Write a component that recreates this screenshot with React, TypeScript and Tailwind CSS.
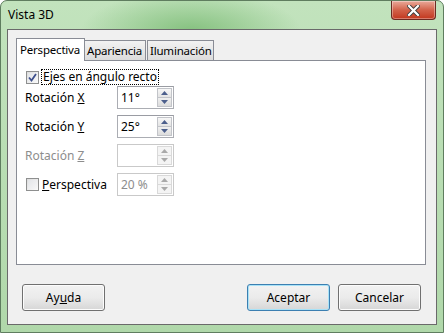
import React from 'react'

const font = { fontFamily: '"Noto Sans", "Open Sans", sans-serif' }

function Arrow({ up, disabled }: { up: boolean; disabled?: boolean }) {
  const c = disabled ? '#a9a9a9' : '#4c5f8c'
  return (
    <svg width="7" height="4" viewBox="0 0 7 4">
      {up ? <path d="M0 4 L3.5 0 L7 4 Z" fill={c} /> : <path d="M0 0 L3.5 4 L7 0 Z" fill={c} />}
    </svg>
  )
}

function Spin({ value, disabled }: { value: string; disabled?: boolean }) {
  return (
    <div
      className={`flex h-[23px] w-[57px] items-stretch border bg-white ${
        disabled ? 'border-[#c9c9c9]' : 'border-[#abadb3] border-t-[#9a9ca3]'
      }`}
    >
      <div className={`flex flex-1 items-center pl-[3px] text-[12px] ${disabled ? 'text-[#8d8d8d]' : 'text-black'}`}>
        {value}
      </div>
      <div className="flex w-[16px] flex-col py-[1px] pr-[1px]">
        <div
          className={`flex flex-1 items-center justify-center border ${
            disabled
              ? 'border-[#d9d9d9] bg-[#f4f4f4]'
              : 'border-[#c2c4c9] bg-gradient-to-b from-[#f7f7f7] to-[#e4e4e4]'
          }`}
        >
          <Arrow up disabled={disabled} />
        </div>
        <div
          className={`flex flex-1 items-center justify-center border border-t-0 ${
            disabled
              ? 'border-[#d9d9d9] bg-[#f4f4f4]'
              : 'border-[#c2c4c9] bg-gradient-to-b from-[#f0f0f0] to-[#dcdcdc]'
          }`}
        >
          <Arrow up={false} disabled={disabled} />
        </div>
      </div>
    </div>
  )
}

function Check({ checked }: { checked?: boolean }) {
  return (
    <div className="flex h-[13px] w-[13px] shrink-0 items-center justify-center border border-[#8e8f8f] bg-gradient-to-br from-[#dcdcdc] to-[#fbfbfb]">
      <div className="flex h-[9px] w-[9px] items-center justify-center bg-gradient-to-br from-[#e3e5e8] to-[#f6f6f7]">
        {checked && (
          <svg width="9" height="9" viewBox="0 0 9 9">
            <path d="M1 4.5 L3.5 7.5 L8 1" stroke="#3d4f8c" strokeWidth="1.8" fill="none" />
          </svg>
        )}
      </div>
    </div>
  )
}

function Row({ label, value, disabled }: { label: React.ReactNode; value: string; disabled?: boolean }) {
  return (
    <div className="flex h-[23px] items-center">
      <div className={`w-[100px] pl-[8px] text-[12px] ${disabled ? 'text-[#8d8d8d]' : 'text-black'}`}>{label}</div>
      <Spin value={value} disabled={disabled} />
    </div>
  )
}

function Button({ children, primary }: { children: React.ReactNode; primary?: boolean }) {
  return (
    <div
      className={`flex h-[27px] w-[83px] items-center justify-center rounded-[3px] border bg-gradient-to-b from-[#f2f2f2] via-[#ebebeb] to-[#d6d6d6] text-[12px] text-black ${
        primary ? 'border-[#3c7fb1] shadow-[inset_0_0_0_1px_#a8e2f7]' : 'border-[#707070] shadow-[inset_0_0_0_1px_#fcfcfc]'
      }`}
    >
      {children}
    </div>
  )
}

export default function App() {
  return (
    <div
      className="flex h-[333px] w-[444px] flex-col overflow-hidden rounded-t-[7px] border border-[#5f7d5f] bg-[#b3dbae]"
      style={{
        ...font,
        backgroundImage:
          'radial-gradient(ellipse 110px 40px at 190px 30px, #85c17f, rgba(133,193,127,0) 100%), linear-gradient(#c2e3bd, #b0d8aa)',
      }}
    >
      {/* Title bar */}
      <div className="flex h-[28px] shrink-0 items-start justify-between">
        <div className="pl-[7px] pt-[5px] text-[12px] text-black">Vista 3D</div>
        <div className="mr-[7px] flex h-[19px] w-[45px] items-center justify-center rounded-b-[4px] border border-t-0 border-[#6b2b22] bg-gradient-to-b from-[#e9a99a] via-[#d2624a] to-[#c2351c] shadow-[inset_0_0_0_1px_rgba(255,255,255,0.35)]">
          <svg width="13" height="11" viewBox="0 0 13 11">
            <path d="M2 1 L11 10 M11 1 L2 10" stroke="#3b3b3b" strokeWidth="4" strokeLinecap="square" />
            <path d="M2 1 L11 10 M11 1 L2 10" stroke="#ffffff" strokeWidth="2.2" strokeLinecap="square" />
          </svg>
        </div>
      </div>

      {/* Client area */}
      <div className="mx-[6px] h-[296px] shrink-0 border border-[#6a6a6a] bg-[#f0f0f0]">
        {/* Tabs */}
        <div className="ml-[8px] mt-[8px] flex items-end text-[11.5px] tracking-[-0.2px] text-black">
          <div className="relative z-10 -mb-px flex h-[23px] w-[69px] items-start border border-b-0 border-[#898c95] bg-white pl-[3px] pt-[2px]">
            Perspectiva
          </div>
          <div className="flex h-[20px] w-[61px] items-center border border-l-0 border-b-0 border-[#898c95] bg-gradient-to-b from-[#f2f2f2] to-[#dcdcdc] pl-[2px]">
            Apariencia
          </div>
          <div className="ml-px flex h-[20px] w-[67px] items-center border border-b-0 border-[#898c95] bg-gradient-to-b from-[#f2f2f2] to-[#dcdcdc] pl-[2px]">
            Iluminación
          </div>
        </div>

        {/* Panel */}
        <div className="ml-[8px] flex h-[205px] w-[410px] flex-col border border-[#898c95] bg-white pt-[8px]">
          <div className="flex h-[16px] items-center pl-[9px]">
            <Check checked />
            <div className="ml-[2px] border border-dotted border-black px-px text-[12px] leading-[14px] text-black">
              Ejes en ángulo recto
            </div>
          </div>
          <div className="mt-[1px] flex flex-col gap-[6px]">
            <Row label={<>Rotación <span className="underline">X</span></>} value="11°" />
            <Row label={<>Rotación <span className="underline">Y</span></>} value="25°" />
            <Row label={<>Rotación <span className="underline">Z</span></>} value="" disabled />
            <div className="flex h-[23px] items-center">
              <div className="flex w-[100px] items-center pl-[9px] text-[12px] text-black">
                <Check />
                <span className="ml-[3px]">
                  <span className="underline">P</span>erspectiva
                </span>
              </div>
              <Spin value="20 %" disabled />
            </div>
          </div>
        </div>

        {/* Buttons */}
        <div className="ml-[14px] mr-[15px] mt-[19px] flex items-center">
          <Button>
            Ay<span className="underline">u</span>da
          </Button>
          <div className="flex-1" />
          <Button primary>Aceptar</Button>
          <div className="w-[8px]" />
          <Button>Cancelar</Button>
        </div>
      </div>
    </div>
  )
}
